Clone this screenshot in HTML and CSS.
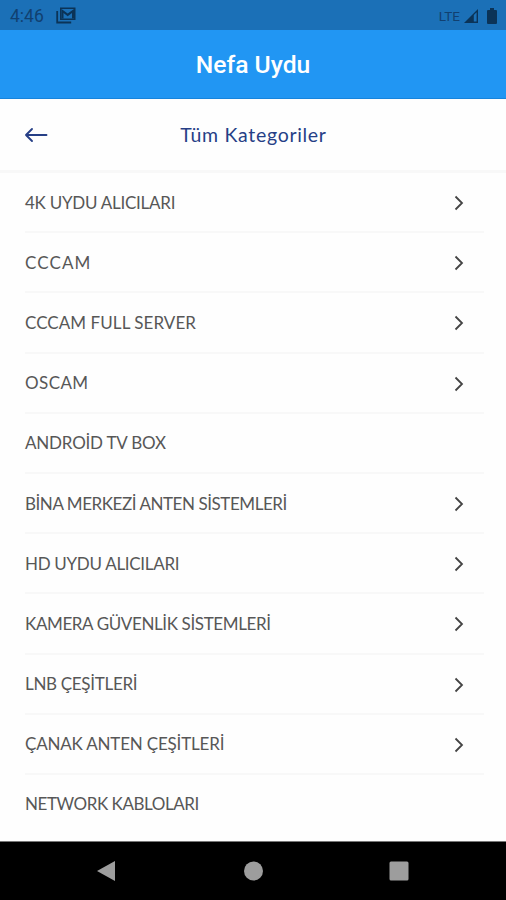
FILE: index.html
```html
<!DOCTYPE html>
<html lang="tr">
<head>
<meta charset="utf-8">
<title>Nefa Uydu</title>
<link rel="stylesheet" href="styles.css">
</head>
<body>
<div class="screen">
  <div class="status">
    <span class="clock">4:46</span>
    <svg class="mail" viewBox="0 0 20 17"><path d="M1.200 4v11.500h14" fill="none" stroke="currentColor" stroke-width="1.800"/><path fill="currentColor" fill-rule="evenodd" d="M4 0.500h15.500v12.500H4zM5.500 2v9.500h12.500V2z"/><path fill="currentColor" d="M5.500 2 11.700 6.500 18 2v9.500h-2V6l-4.300 3.200L7.500 6v5.500h-2z"/></svg>
    <span class="lte">LTE</span>
    <svg class="signal" viewBox="0 0 15 15"><path d="M0 15 15 0v15z" fill="currentColor"/><path d="M10.500 6.500 13.500 3.500v10h-3z" fill="#1b70b7"/></svg>
    <svg class="battery" viewBox="0 0 10 16"><path d="M3 0h4v2h2a1 1 0 0 1 1 1v12a1 1 0 0 1-1 1H1a1 1 0 0 1-1-1V3a1 1 0 0 1 1-1h2z" fill="currentColor"/></svg>
  </div>
  <header class="appbar">Nefa Uydu</header>
  <div class="heading">
    <svg class="back" viewBox="0 0 24 16"><path d="M8 2 2 8 8 14M2 8h20.500" fill="none" stroke="currentColor" stroke-width="1.900" stroke-linecap="round" stroke-linejoin="round"/></svg>
    <h1>Tüm Kategoriler</h1>
  </div>
  <ul class="list">
    <li><span class="r1">4K UYDU ALICILARI</span><svg class="chev" viewBox="0 0 10 16"><path d="M1.500 1.500 8 8l-6.500 6.500"/></svg></li>
    <li><span class="r2">CCCAM</span><svg class="chev" viewBox="0 0 10 16"><path d="M1.500 1.500 8 8l-6.500 6.500"/></svg></li>
    <li><span class="r3">CCCAM FULL SERVER</span><svg class="chev" viewBox="0 0 10 16"><path d="M1.500 1.500 8 8l-6.500 6.500"/></svg></li>
    <li><span class="r4">OSCAM</span><svg class="chev" viewBox="0 0 10 16"><path d="M1.500 1.500 8 8l-6.500 6.500"/></svg></li>
    <li><span class="r5">ANDROİD TV BOX</span></li>
    <li><span class="r6">BİNA MERKEZİ ANTEN SİSTEMLERİ</span><svg class="chev" viewBox="0 0 10 16"><path d="M1.500 1.500 8 8l-6.500 6.500"/></svg></li>
    <li><span class="r7">HD UYDU ALICILARI</span><svg class="chev" viewBox="0 0 10 16"><path d="M1.500 1.500 8 8l-6.500 6.500"/></svg></li>
    <li><span class="r8">KAMERA GÜVENLİK SİSTEMLERİ</span><svg class="chev" viewBox="0 0 10 16"><path d="M1.500 1.500 8 8l-6.500 6.500"/></svg></li>
    <li><span class="r9">LNB ÇEŞİTLERİ</span><svg class="chev" viewBox="0 0 10 16"><path d="M1.500 1.500 8 8l-6.500 6.500"/></svg></li>
    <li><span class="r10">ÇANAK ANTEN ÇEŞİTLERİ</span><svg class="chev" viewBox="0 0 10 16"><path d="M1.500 1.500 8 8l-6.500 6.500"/></svg></li>
    <li><span class="r11">NETWORK KABLOLARI</span></li>
  </ul>
  <nav class="navbar">
    <svg viewBox="0 0 22 22"><path d="M2 11 20 1v20z"/></svg>
    <svg viewBox="0 0 22 22"><circle cx="11.500" cy="11" r="9.500"/></svg>
    <svg viewBox="0 0 22 22"><rect x="1.500" y="1.500" width="19" height="19" rx="1.500"/></svg>
  </nav>
</div>
</body>
</html>
```
FILE: styles.css
```css
* { box-sizing: border-box; }
body { margin: 0; background: #fefefe; font-family: Lato, sans-serif; }
.screen { width: 506px; height: 900px; display: flex; flex-direction: column; overflow: hidden; }
.status { height: 30px; flex: none; background: #1b70b7; color: #0b3357; display: flex; align-items: center; padding: 1px 9px 0 10px; font-family: Roboto, sans-serif; }
.clock { font-size: 17.500px; color: #114070; }
.mail { width: 20px; height: 17px; margin-left: 12px; }
.lte { margin-left: auto; font-size: 13.500px; color: #114070; }
.signal { width: 14px; height: 14px; margin-left: 4px; }
.battery { width: 10px; height: 16px; margin-left: 9px; }
.appbar { height: 69px; flex: none; background: #2196f3; border-bottom: 1px solid #1784dc; color: #fff; font: 500 24.700px Roboto, sans-serif; display: flex; align-items: center; justify-content: center; }
.heading { height: 74px; flex: none; border-bottom: 3px solid #f8f8f8; display: grid; grid-template-columns: 24px 1fr 24px; align-items: center; padding: 0 23px 0 24px; color: #263f86; }
.back { width: 24px; height: 16px; }
h1 { margin: 0; font-size: 19.500px; font-weight: 400; text-align: center; letter-spacing: .7px; }
.list { list-style: none; margin: 0; padding: 0 22px 0 25px; flex: 1; min-height: 0; overflow: hidden; }
.list li { height: 60.200px; border-bottom: 2px solid #f8f8f8; display: flex; align-items: center; justify-content: space-between; color: #575757; font-size: 17px; white-space: nowrap; }
.list li:last-child { border-bottom-color: transparent; }
.r1 { letter-spacing: -.26px; }
.r2 { letter-spacing: 1.100px; }
.r3 { letter-spacing: .06px; }
.r4 { letter-spacing: .4px; }
.r5 { letter-spacing: -.2px; }
.r6 { letter-spacing: -.44px; }
.r7 { letter-spacing: -.3px; }
.r8 { letter-spacing: -.38px; }
.r9 { letter-spacing: -.31px; }
.r10 { letter-spacing: -.19px; }
.r11 { letter-spacing: -.44px; }
.chev { width: 10px; height: 16px; margin-right: 20px; position: relative; top: 1px; fill: none; stroke: #444; stroke-width: 1.800; }
.navbar { height: 59px; flex: none; background: #000; border-top: 1px solid #777; display: flex; justify-content: space-between; padding: 18px 96px 0 95px; fill: #9d9d9d; }
.navbar svg { width: 22px; height: 22px; }
```
